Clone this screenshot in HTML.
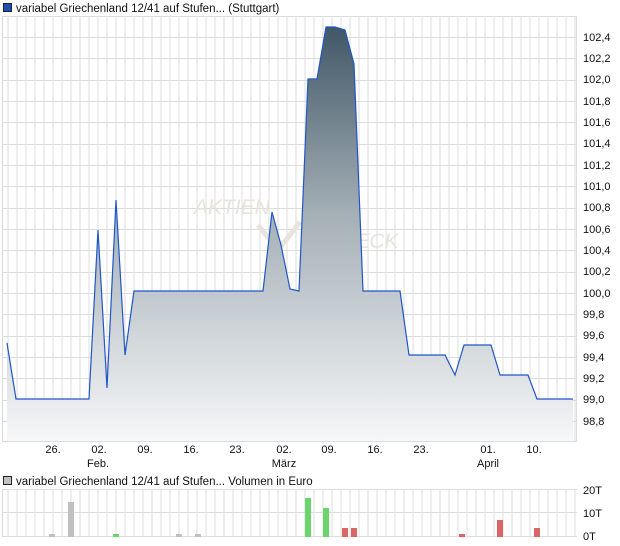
<!DOCTYPE html>
<html><head><meta charset="utf-8"><style>
html,body{margin:0;padding:0;background:#fff;width:620px;height:546px;overflow:hidden}
svg{display:block;font-family:"Liberation Sans",sans-serif}
</style></head><body>
<svg width="620" height="546" viewBox="0 0 620 546" xmlns="http://www.w3.org/2000/svg">
<defs>
<linearGradient id="g" gradientUnits="userSpaceOnUse" x1="0" y1="27" x2="0" y2="441">
<stop offset="0" stop-color="#415766"/>
<stop offset="0.45" stop-color="#a4afb6"/>
<stop offset="1" stop-color="#f6f7f8"/>
</linearGradient>
<pattern id="vg" x="7.5" y="0" width="9" height="546" patternUnits="userSpaceOnUse">
<line x1="0.5" y1="0" x2="0.5" y2="546" stroke="#dcdcdc" stroke-width="1"/>
</pattern>
</defs>
<rect x="3.5" y="3.5" width="8" height="8" fill="#1f4fb4" stroke="#222" stroke-width="1"/>
<text x="16" y="12" font-size="11.5" fill="#111">variabel Griechenland 12/41 auf Stufen... (Stuttgart)</text>
<rect x="3" y="16" width="573" height="425" fill="url(#vg)"/>
<g stroke="#dcdcdc" stroke-width="1">
<line x1="2.5" y1="16.5" x2="577" y2="16.5"/>
<line x1="2.5" y1="37.5" x2="577" y2="37.5"/>
<line x1="2.5" y1="58.5" x2="577" y2="58.5"/>
<line x1="2.5" y1="80.5" x2="577" y2="80.5"/>
<line x1="2.5" y1="101.5" x2="577" y2="101.5"/>
<line x1="2.5" y1="122.5" x2="577" y2="122.5"/>
<line x1="2.5" y1="144.5" x2="577" y2="144.5"/>
<line x1="2.5" y1="165.5" x2="577" y2="165.5"/>
<line x1="2.5" y1="186.5" x2="577" y2="186.5"/>
<line x1="2.5" y1="208.5" x2="577" y2="208.5"/>
<line x1="2.5" y1="229.5" x2="577" y2="229.5"/>
<line x1="2.5" y1="250.5" x2="577" y2="250.5"/>
<line x1="2.5" y1="272.5" x2="577" y2="272.5"/>
<line x1="2.5" y1="293.5" x2="577" y2="293.5"/>
<line x1="2.5" y1="314.5" x2="577" y2="314.5"/>
<line x1="2.5" y1="336.5" x2="577" y2="336.5"/>
<line x1="2.5" y1="357.5" x2="577" y2="357.5"/>
<line x1="2.5" y1="378.5" x2="577" y2="378.5"/>
<line x1="2.5" y1="400.5" x2="577" y2="400.5"/>
<line x1="2.5" y1="421.5" x2="577" y2="421.5"/>
<line x1="2.5" y1="441.5" x2="577" y2="441.5"/>
<line x1="2.5" y1="16" x2="2.5" y2="442"/>
<line x1="576.5" y1="16" x2="576.5" y2="442"/>
</g>
<text x="194" y="214" font-size="21" font-style="italic" fill="#e8e3dc">AKTIEN</text>
<text x="325" y="248" font-size="21" font-style="italic" fill="#e8e3dc">CHECK</text>
<path d="M258 225 L278 250 L300 222" fill="none" stroke="#e8e3dc" stroke-width="5"/>
<path d="M7 343 L16 399 L89 399 L98 230 L107 388 L116 200 L125 355 L134 291 L263 291 L272 212 L281 245 L290 289 L299 291 L308 79 L317 79 L326 27 L335 27 L345 30 L354 64 L363 291 L400 291 L409 355 L445 355 L455 375 L464 345 L491 345 L500 375 L528 375 L537 399 L573 399 L573 441 L7 441 Z" fill="url(#g)"/>
<path d="M7 343 L16 399 L89 399 L98 230 L107 388 L116 200 L125 355 L134 291 L263 291 L272 212 L281 245 L290 289 L299 291 L308 79 L317 79 L326 27 L335 27 L345 30 L354 64 L363 291 L400 291 L409 355 L445 355 L455 375 L464 345 L491 345 L500 375 L528 375 L537 399 L573 399" fill="none" stroke="#1f56c8" stroke-width="1.2"/>
<g font-size="11" fill="#111">
<text x="583" y="41">102,4</text><text x="583" y="62">102,2</text><text x="583" y="83">102,0</text>
<text x="583" y="105">101,8</text><text x="583" y="126">101,6</text><text x="583" y="147">101,4</text>
<text x="583" y="169">101,2</text><text x="583" y="190">101,0</text><text x="583" y="211">100,8</text>
<text x="583" y="233">100,6</text><text x="583" y="254">100,4</text><text x="583" y="275">100,2</text>
<text x="583" y="297">100,0</text><text x="583" y="318">99,8</text><text x="583" y="339">99,6</text>
<text x="583" y="361">99,4</text><text x="583" y="382">99,2</text><text x="583" y="403">99,0</text>
<text x="583" y="425">98,8</text>
</g>
<g font-size="11" fill="#111" text-anchor="middle">
<text x="53" y="453">26.</text><text x="99" y="453">02.</text><text x="145" y="453">09.</text>
<text x="191" y="453">16.</text><text x="237" y="453">23.</text><text x="284" y="453">02.</text>
<text x="329" y="453">09.</text><text x="375" y="453">16.</text><text x="421" y="453">23.</text>
<text x="488" y="453">01.</text><text x="534" y="453">10.</text>
<text x="98" y="467">Feb.</text><text x="284" y="467">März</text><text x="488" y="467">April</text>
</g>
<rect x="3.5" y="476.5" width="8" height="8" fill="#c0c0c0" stroke="#222" stroke-width="1"/>
<text x="16" y="485" font-size="11.5" fill="#111">variabel Griechenland 12/41 auf Stufen... Volumen in Euro</text>
<rect x="3" y="489" width="573" height="48" fill="url(#vg)"/>
<g stroke="#dcdcdc" stroke-width="1">
<line x1="2.5" y1="489.5" x2="577" y2="489.5"/>
<line x1="2.5" y1="512.5" x2="577" y2="512.5"/>
<line x1="2.5" y1="536.5" x2="577" y2="536.5"/>
<line x1="2.5" y1="489" x2="2.5" y2="537"/>
</g>
<g>
<rect x="68" y="502" width="6" height="35" fill="#c0c0c0"/>
<rect x="49" y="534" width="6" height="3" fill="#c0c0c0"/>
<rect x="176" y="534" width="6" height="3" fill="#c0c0c0"/>
<rect x="195" y="534" width="6" height="3" fill="#c0c0c0"/>
<rect x="113" y="534" width="6" height="3" fill="#6cd46c"/>
<rect x="305" y="498" width="6" height="39" fill="#6cd46c"/>
<rect x="323" y="508" width="6" height="29" fill="#6cd46c"/>
<rect x="342" y="528" width="6" height="9" fill="#d96666"/>
<rect x="351" y="528" width="6" height="9" fill="#d96666"/>
<rect x="459" y="534" width="6" height="3" fill="#d96666"/>
<rect x="497" y="520" width="6" height="17" fill="#d96666"/>
<rect x="534" y="528" width="6" height="9" fill="#d96666"/>
</g>
<g font-size="11" fill="#111">
<text x="583" y="494">20T</text><text x="583" y="517">10T</text><text x="583" y="540">0T</text>
</g>
</svg>
</body></html>
